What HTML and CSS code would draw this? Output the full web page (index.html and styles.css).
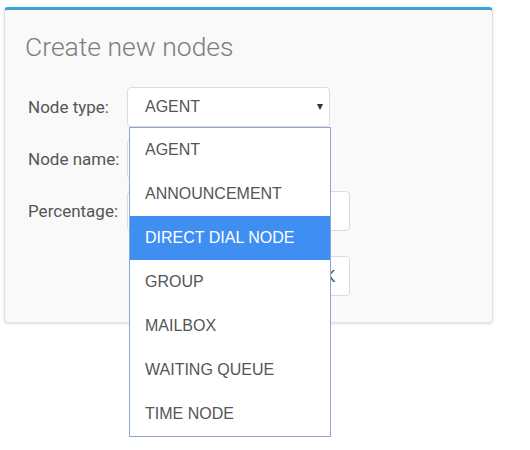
FILE: index.html
```html
<!DOCTYPE html>
<html>
<head>
<meta charset="utf-8">
<link rel="stylesheet" href="styles.css">
</head>
<body>
<div class="page">
  <div class="card">
    <h1 class="title">Create new nodes</h1>
    <div class="form">
      <label class="label">Node type:</label>
      <div class="select-wrap">
        <div class="select">AGENT<span class="arrow"></span></div>
        <ul class="dropdown">
          <li class="option">AGENT</li>
          <li class="option">ANNOUNCEMENT</li>
          <li class="option selected">DIRECT DIAL NODE</li>
          <li class="option">GROUP</li>
          <li class="option">MAILBOX</li>
          <li class="option">WAITING QUEUE</li>
          <li class="option">TIME NODE</li>
        </ul>
      </div>
      <label class="label">Node name:</label>
      <div class="input narrow"></div>
      <label class="label">Percentage:</label>
      <div class="input"></div>
      <span class="spacer"></span>
      <button class="btn">OK</button>
    </div>
  </div>
</div>
</body>
</html>
```

FILE: styles.css
```css
html, body {
  margin: 0;
  padding: 0;
  background: #ffffff;
}
.page {
  padding: 7px 0 0 4px;
  min-height: 450px;
  box-sizing: border-box;
}
.card {
  width: 489px;
  background: #f9f9f9;
  border: 1px solid #e1e1e1;
  border-top: 3px solid #3ba1d9;
  border-radius: 4px;
  box-shadow: 0 1px 3px rgba(0, 0, 0, 0.12);
  padding: 22px 20px 0 20px;
  box-sizing: border-box;
  height: 316px;
}
.title {
  margin: 0;
  font-family: Roboto, "Liberation Sans", sans-serif;
  font-weight: 300;
  font-size: 26.5px;
  line-height: 30px;
  color: #7d7d7d;
}
.form {
  margin: 25px 0 0 3px;
  display: grid;
  grid-template-columns: 99px 223px;
  grid-template-rows: 40px 40px 40px 53px;
  row-gap: 12px;
  align-items: center;
}
.label {
  font-family: Roboto, "Liberation Sans", sans-serif;
  font-size: 17px;
  color: #555555;
}
.select-wrap {
  position: relative;
  height: 40px;
}
.select {
  width: 203px;
  height: 40px;
  box-sizing: border-box;
  background: #ffffff;
  border: 1px solid #dcdcdc;
  border-radius: 4px;
  display: flex;
  align-items: center;
  padding-left: 17px;
  font-family: "Liberation Sans", Arial, sans-serif;
  font-size: 16px;
  color: #555555;
  position: relative;
}
.arrow {
  position: absolute;
  right: 6px;
  top: 16px;
  width: 0;
  height: 0;
  border-left: 3.5px solid transparent;
  border-right: 3.5px solid transparent;
  border-top: 6px solid #333333;
}
.dropdown {
  position: absolute;
  left: 2px;
  top: 40px;
  width: 202px;
  margin: 0;
  padding: 0;
  list-style: none;
  background: #ffffff;
  border: 1px solid #8ea5d6;
  box-sizing: border-box;
  z-index: 10;
}
.option {
  height: 44px;
  display: flex;
  align-items: center;
  padding-left: 15px;
  font-family: "Liberation Sans", Arial, sans-serif;
  font-size: 16px;
  color: #555555;
}
.option.selected {
  background: #3f8ff3;
  color: #ffffff;
}
.input {
  height: 40px;
  box-sizing: border-box;
  background: #ffffff;
  border: 1px solid #dcdcdc;
  border-radius: 4px;
}
.input.narrow {
  width: 203px;
}
.btn {
  align-self: end;
  justify-self: end;
  width: 52px;
  height: 40px;
  background: #ffffff;
  border: 1px solid #dcdcdc;
  border-radius: 4px;
  font-family: Roboto, "Liberation Sans", sans-serif;
  font-size: 17px;
  color: #555555;
  padding: 0;
}
```
